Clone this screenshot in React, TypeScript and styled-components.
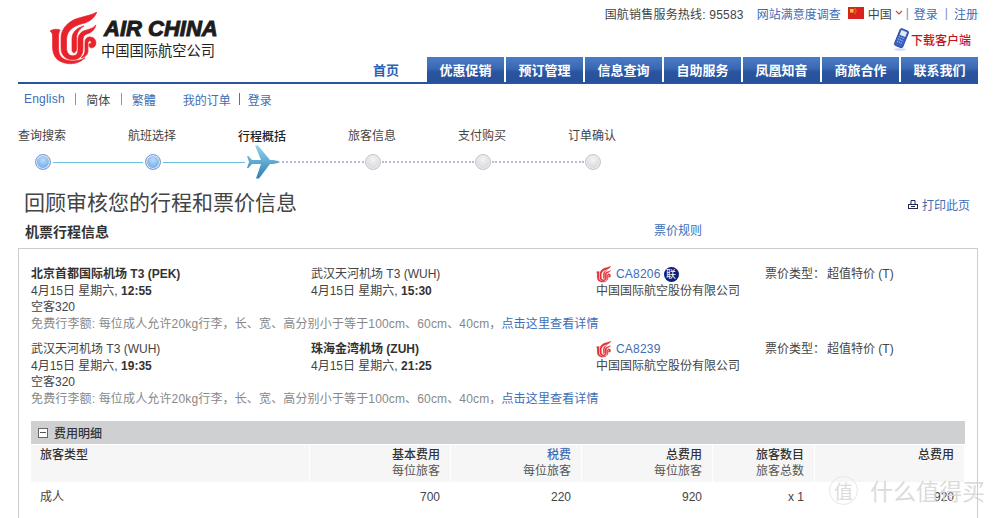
import React from 'react'
import styled, { createGlobalStyle } from 'styled-components'

const BLUE = '#3e6db5'
const TEXT = '#444'

const GlobalStyle = createGlobalStyle`
  html, body {
    margin: 0;
    padding: 0;
    background: #fff;
    overflow: hidden;
  }
  body {
    font-family: "Liberation Sans", "Noto Sans CJK SC", sans-serif;
    font-size: 12px;
    color: ${TEXT};
  }
`

const Page = styled.div`
  position: relative;
  width: 996px;
  height: 518px;
  box-sizing: border-box;
  padding: 0 18px;
  overflow: hidden;
`

const Header = styled.header`
  display: flex;
  justify-content: space-between;
  height: 82px;
  border-bottom: 2px solid #2a549f;
`

const Logo = styled.div`
  display: flex;
  align-items: flex-start;
  gap: 6px;
  margin: 12px 0 0 31px;
`

const Wordmark = styled.div`
  display: flex;
  flex-direction: column;
  padding-top: 5px;
`

const WordmarkEn = styled.span`
  margin-left: 1px;
  font: italic 700 22px/24px "Liberation Sans", sans-serif;
  color: #1d1d1d;
  -webkit-text-stroke: 1px #1d1d1d;
`

const WordmarkCn = styled.span`
  margin-left: -2px;
  font: 400 14.25px/18px "Noto Sans CJK SC", sans-serif;
  color: #222;
`

const HeaderRight = styled.div`
  display: flex;
  flex-direction: column;
  align-items: flex-end;
`

const TopLinks = styled.div`
  display: flex;
  align-items: center;
  height: 16px;
  margin-top: 5px;
  color: ${TEXT};
`

const Hotline = styled.span`
  letter-spacing: 0.2px;
`

const TopLink = styled.a<{ $gap?: number }>`
  color: ${BLUE};
  margin-left: ${(p) => p.$gap ?? 0}px;
`

const Pipe = styled.span<{ $wide?: boolean }>`
  color: #7b8fc0;
  margin: 0 ${(p) => (p.$wide ? 6 : 5)}px 0 ${(p) => (p.$wide ? 7 : 3)}px;
`

const Flag = styled.svg`
  margin: 0 4px 0 7px;
`

const Caret = styled.svg`
  margin-left: 3px;
`

const Download = styled.div`
  display: flex;
  align-items: center;
  gap: 1px;
  height: 26px;
  margin: 6px 7px 0 0;
  color: #c3141b;
  font-weight: 500;
`

const Nav = styled.nav`
  display: flex;
  align-items: stretch;
  height: 26px;
  margin-top: 5px;
`

const NavHome = styled.a`
  display: flex;
  align-items: center;
  margin-right: 26px;
  color: #2a63b5;
  font-size: 13px;
  font-weight: 700;
`

const NavItem = styled.a`
  display: flex;
  align-items: center;
  justify-content: center;
  width: 77px;
  margin-left: 2px;
  background: linear-gradient(#4a7cc4, #3a69b4 45%, #2a549f 60%, #28519b);
  color: #fff;
  font-size: 13px;
  font-weight: 700;

  &:first-of-type {
    margin-left: 0;
  }
`

const LangBar = styled.div`
  display: flex;
  align-items: center;
  height: 30px;
  padding-left: 6px;
`

const LangLink = styled.a<{ $active?: boolean; $gap?: number; $latin?: boolean }>`
  color: ${(p) => (p.$active ? TEXT : BLUE)};
  margin-left: ${(p) => p.$gap ?? 0}px;
  letter-spacing: ${(p) => (p.$latin ? '0.2px' : '0')};
`

const LangPipe = styled.span<{ $orange?: boolean }>`
  width: 1px;
  height: 12px;
  margin: 0 ${(p) => (p.$orange ? '10px' : '8px')} 0 ${(p) => (p.$orange ? '10.5px' : '8px')};
  background: ${(p) => (p.$orange ? '#c98a3c' : '#5a6f9c')};
`

const Steps = styled.div`
  display: flex;
  margin-top: 14px;
`

const Step = styled.div<{ $current?: boolean }>`
  width: 110px;
  height: 16px;
  line-height: 16px;
  margin-top: ${(p) => (p.$current ? 1 : 0)}px;
  color: ${(p) => (p.$current ? '#222' : TEXT)};
  font-weight: ${(p) => (p.$current ? 500 : 400)};
`

const Track = styled.div`
  display: flex;
  align-items: center;
  height: 34px;
  margin: 0 0 0 17px;
`

const Dot = styled.span<{ $done?: boolean }>`
  flex: none;
  box-sizing: border-box;
  width: 16px;
  height: 16px;
  border-radius: 50%;
  border: 1px solid ${(p) => (p.$done ? '#7f9ad2' : '#c4c4c4')};
  background: ${(p) =>
    p.$done
      ? 'radial-gradient(circle at 50% 35%, #bcdcf8, #6fa9e8 75%)'
      : 'radial-gradient(circle at 50% 35%, #f4f4f4, #d8d8d8 75%)'};
  box-shadow: inset 0 0 0 1px #e8eef8;
`

const Line = styled.span<{ $width: number }>`
  flex: none;
  width: ${(p) => p.$width}px;
  margin: 0 2px;
  border-top: 1px solid #6ec0e0;
`

const DottedLine = styled.span<{ $width: number }>`
  flex: none;
  width: ${(p) => p.$width}px;
  margin: 0 1px;
  border-top: 2px dotted #b7bbdc;
`

const PlaneSvg = styled.svg`
  flex: none;
`

const TitleRow = styled.div`
  display: flex;
  justify-content: space-between;
  align-items: flex-end;
  height: 30px;
  margin-top: 9px;
  padding: 0 8px 0 6px;
`

const Title = styled.h1`
  margin: 0;
  font: 400 21px/30px "Liberation Sans", "Noto Sans CJK SC", sans-serif;
  color: #444;
`

const PrintLink = styled.a`
  display: flex;
  align-items: center;
  gap: 4px;
  margin-bottom: 5px;
  color: ${BLUE};
`

const SubRow = styled.div`
  display: flex;
  align-items: center;
  height: 26px;
  padding-left: 7px;
`

const SubTitle = styled.h2`
  width: 629px;
  margin: 0;
  font-size: 14px;
  font-weight: 700;
  color: #333;
`

const RulesLink = styled.a`
  margin-top: -4px;
  color: ${BLUE};
`

const Box = styled.section`
  margin-top: 4px;
  padding: 17px 12px 0;
  border: 1px solid #ccc;
  height: 400px;
`

const Segment = styled.div`
  display: grid;
  grid-template-columns: 280px 285px 169px 1fr;
  line-height: 16.6px;
  margin-bottom: 9px;
  height: 66px;
`

const Stack = styled.div`
  display: flex;
  flex-direction: column;
`

const Airport = styled.span<{ $bold?: boolean }>`
  font-weight: ${(p) => (p.$bold ? 700 : 400)};
  color: ${(p) => (p.$bold ? '#333' : TEXT)};
`

const Time = styled.b`
  font-weight: 700;
  color: #333;
`

const Baggage = styled.div`
  grid-column: 1 / -1;
  color: #888;
  letter-spacing: 0.15px;
`

const BaggageLink = styled.a`
  color: ${BLUE};
`

const FlightNo = styled.div`
  display: flex;
  align-items: center;
  gap: 5px;
  color: ${BLUE};
  letter-spacing: 0.2px;
`

const LianBadge = styled.span`
  display: inline-flex;
  align-items: center;
  justify-content: center;
  width: 15px;
  height: 15px;
  margin-left: -2px;
  border-radius: 50%;
  background: #0c1e78;
  color: #fff;
  font-size: 10px;
  line-height: 15px;
`

const FareType = styled.div`
  display: flex;
  gap: 2px;
`

const FeePanel = styled.div`
  margin-top: 14px;
`

const FeeHead = styled.div`
  display: flex;
  align-items: center;
  gap: 6px;
  height: 23px;
  padding-left: 7px;
  background: #cfd0d2;
  color: #333;
  font-weight: 500;
`

const Toggle = styled.span`
  position: relative;
  display: block;
  box-sizing: border-box;
  width: 10px;
  height: 10px;
  border: 1px solid #666;
  background: #fff;

  &::after {
    content: '';
    position: absolute;
    left: 1px;
    right: 1px;
    top: 3px;
    height: 1px;
    background: #555;
  }
`

const FeeGrid = styled.div`
  display: grid;
  grid-template-columns: 279px 141px 131px 131px 102px 150px;
`

const HeadCell = styled.div<{ $left?: boolean }>`
  box-sizing: border-box;
  height: 37px;
  padding: 2px 10px 0 9px;
  margin: 1px 1px 0 0;
  background: #f6f6f6;
  text-align: ${(p) => (p.$left ? 'left' : 'right')};
  line-height: 16px;
`

const HeadStrong = styled.div<{ $link?: boolean }>`
  font-weight: 500;
  color: ${(p) => (p.$link ? BLUE : '#333')};
`

const HeadSub = styled.div`
  color: #555;
`

const BodyCell = styled.div<{ $left?: boolean }>`
  padding: 7px 11px 0 9px;
  line-height: 16px;
  text-align: ${(p) => (p.$left ? 'left' : 'right')};
`

const Watermark = styled.div`
  position: absolute;
  right: 11px;
  bottom: 11px;
  display: flex;
  align-items: center;
  gap: 12px;
  color: rgba(214, 214, 214, 0.88);
  font-size: 23px;
`

const WatermarkMark = styled.span`
  display: flex;
  align-items: center;
  justify-content: center;
  box-sizing: border-box;
  width: 29px;
  height: 29px;
  border: 1.5px solid rgba(225, 225, 225, 0.8);
  border-radius: 50%;
  font-size: 19px;
`

const PHOENIX_BODY = [
  'M1 19 C4 17 8 17 11 18 C10 20 9.5 22 9.5 25 L9.5 37 C9.5 44 13 48 21 49 C25 49.5 31 49 36 46 C30 52 22 53 15 51 C7 49 3.5 43 3.5 35 L3.5 24 C3.5 22 3 21 1 19 Z',
  'M12 26 C12 17 19 9 30 6 C37 4 43 3 48 0 C46 5 42 9 36 11 C27 13 18 17 17.5 27 L17.5 36 C17.5 41 20 44 24 44 C27 44 29 42 29 38 L29 28 C29 23 32 19 38 18 C42 17 46 15 47 13 C46 18 42 21 38 22 C35 23 34 25 34 29 L34 37 C34 44 30 48 24 48 C16 48 12 43 12 36 Z',
  'M23 38 L23 27 C23 21 27 16 35 14 C29 18 27.5 22 27.5 28 L27.5 37 C27.5 39.5 26 41 25 41 C24 41 23 40 23 38 Z',
  'M36 39 L36 31 C36 27 38 25 41 25 C45 25 47 28 47 31 C47 34 45 36 42.5 36 C41 36 40 35 40 33.5 C40 32 41 31 42.5 31.5 C42.5 29.5 41.5 28.5 40.5 29 C39 29.5 39 31 39 33 L39 39 C39 43 36 45.5 32 46 C34.5 44 36 42 36 39 Z',
]

const Phoenix = ({ size, color }: { size: number; color: string }) => (
  <svg width={size} height={size * 1.1} viewBox="0 0 48 53" fill={color} stroke={color} strokeWidth="0.7">
    {PHOENIX_BODY.map((d) => (
      <path key={d} d={d} />
    ))}
  </svg>
)

const PlaneIcon = () => (
  <PlaneSvg width="34" height="34" viewBox="0 0 34 34">
    <defs>
      <linearGradient id="plane" x1="0" y1="0" x2="0" y2="1">
        <stop offset="0" stopColor="#8fd4ee" />
        <stop offset="1" stopColor="#2f7fb5" />
      </linearGradient>
    </defs>
    <path
      fill="url(#plane)"
      d="M33 17 C31 15.5 27 15 23 15 L11 0.5 L8 0.5 L14 15 L5 15 L1.5 11 L0 11 L2 17 L0 23 L1.5 23 L5 19 L14 19 L9 33.5 L12 33.5 L23 19 C27 19 31 18.5 33 17 Z"
    />
  </PlaneSvg>
)

const PhoneIcon = () => (
  <svg width="18" height="24" viewBox="0 0 18 24">
    <g transform="rotate(22 9 10)">
      <rect x="5" y="1" width="9" height="18" rx="1.5" fill="#3b63c4" stroke="#24418f" strokeWidth="0.8" />
      <rect x="6.5" y="2.5" width="6" height="5" fill="#dfe9fb" />
      <path d="M6.5 9.5h6M6.5 12h6M6.5 14.5h6" stroke="#b9ccf2" strokeWidth="1" strokeDasharray="1 1" />
    </g>
    <ellipse cx="8" cy="21.5" rx="6" ry="1.5" fill="#d6deee" />
  </svg>
)

const PrinterIcon = () => (
  <svg width="10" height="10" viewBox="0 0 10 10" fill="none" stroke="#222c52" strokeWidth="1">
    <path d="M3 4.5V0.5H7V4.5" />
    <rect x="0.5" y="4.5" width="9" height="4" />
    <path d="M3 6.5H7" />
  </svg>
)

const ChinaFlag = () => (
  <Flag width="16" height="12" viewBox="0 0 16 12">
    <rect width="16" height="12" fill="#d8231f" />
    <rect x="2" y="2" width="3.5" height="3.5" fill="#f6d531" />
    <rect x="6.5" y="1.5" width="1" height="1" fill="#f6d531" />
    <rect x="7.5" y="3.5" width="1" height="1" fill="#f6d531" />
    <rect x="6.5" y="5.5" width="1" height="1" fill="#f6d531" />
  </Flag>
)

const navItems = ['优惠促销', '预订管理', '信息查询', '自助服务', '凤凰知音', '商旅合作', '联系我们']
const stepLabels = ['查询搜索', '航班选择', '行程概括', '旅客信息', '支付购买', '订单确认']
const baggage = '免费行李额: 每位成人允许20kg行李，长、宽、高分别小于等于100cm、60cm、40cm，'

type Flight = {
  from: string
  fromBold: boolean
  depart: string
  to: string
  toBold: boolean
  arrive: string
  number: string
  codeshare: boolean
}

const flights: Flight[] = [
  {
    from: '北京首都国际机场 T3 (PEK)',
    fromBold: true,
    depart: '12:55',
    to: '武汉天河机场 T3 (WUH)',
    toBold: false,
    arrive: '15:30',
    number: 'CA8206',
    codeshare: true,
  },
  {
    from: '武汉天河机场 T3 (WUH)',
    fromBold: false,
    depart: '19:35',
    to: '珠海金湾机场 (ZUH)',
    toBold: true,
    arrive: '21:25',
    number: 'CA8239',
    codeshare: false,
  },
]

const App = () => {
  return (
    <Page>
      <GlobalStyle />
      <Header>
        <Logo>
          <Phoenix size={48} color="#e8232c" />
          <Wordmark>
            <WordmarkEn>AIR CHINA</WordmarkEn>
            <WordmarkCn>中国国际航空公司</WordmarkCn>
          </Wordmark>
        </Logo>
        <HeaderRight>
          <TopLinks>
            <Hotline>国航销售服务热线: 95583</Hotline>
            <TopLink $gap={13}>网站满意度调查</TopLink>
            <ChinaFlag />
            中国
            <Caret width="8" height="6" viewBox="0 0 8 6" fill="none" stroke="#c0504d" strokeWidth="1.2">
              <path d="M1 1l3 3 3-3" />
            </Caret>
            <Pipe>|</Pipe>
            <TopLink>登录</TopLink>
            <Pipe $wide>|</Pipe>
            <TopLink>注册</TopLink>
          </TopLinks>
          <Download>
            <PhoneIcon />
            下载客户端
          </Download>
          <Nav>
            <NavHome>首页</NavHome>
            {navItems.map((item) => (
              <NavItem key={item}>{item}</NavItem>
            ))}
          </Nav>
        </HeaderRight>
      </Header>

      <LangBar>
        <LangLink $latin>English</LangLink>
        <LangPipe $orange />
        <LangLink $active>简体</LangLink>
        <LangPipe $orange />
        <LangLink>繁體</LangLink>
        <LangLink $gap={27}>我的订单</LangLink>
        <LangPipe />
        <LangLink>登录</LangLink>
      </LangBar>

      <Steps>
        {stepLabels.map((label, i) => (
          <Step key={label} $current={i === 2}>{label}</Step>
        ))}
      </Steps>
      <Track>
        <Dot $done />
        <Line $width={90} />
        <Dot $done />
        <Line $width={82} />
        <PlaneIcon />
        <DottedLine $width={82} />
        <Dot />
        <DottedLine $width={92} />
        <Dot />
        <DottedLine $width={92} />
        <Dot />
      </Track>

      <TitleRow>
        <Title>回顾审核您的行程和票价信息</Title>
        <PrintLink>
          <PrinterIcon />
          打印此页
        </PrintLink>
      </TitleRow>
      <SubRow>
        <SubTitle>机票行程信息</SubTitle>
        <RulesLink>票价规则</RulesLink>
      </SubRow>

      <Box>
        {flights.map((f) => (
          <Segment key={f.number}>
            <Stack>
              <Airport $bold={f.fromBold}>{f.from}</Airport>
              <span>4月15日 星期六, <Time>{f.depart}</Time></span>
              <span>空客320</span>
            </Stack>
            <Stack>
              <Airport $bold={f.toBold}>{f.to}</Airport>
              <span>4月15日 星期六, <Time>{f.arrive}</Time></span>
            </Stack>
            <Stack>
              <FlightNo>
                <Phoenix size={15} color="#e5333b" />
                {f.number}
                {f.codeshare && <LianBadge>联</LianBadge>}
              </FlightNo>
              <span>中国国际航空股份有限公司</span>
            </Stack>
            <FareType>
              <span>票价类型：</span>
              <span>超值特价 (T)</span>
            </FareType>
            <Baggage>
              {baggage}
              <BaggageLink>点击这里查看详情</BaggageLink>
            </Baggage>
          </Segment>
        ))}

        <FeePanel>
          <FeeHead>
            <Toggle />
            费用明细
          </FeeHead>
          <FeeGrid>
            <HeadCell $left>
              <HeadStrong>旅客类型</HeadStrong>
            </HeadCell>
            <HeadCell>
              <HeadStrong>基本费用</HeadStrong>
              <HeadSub>每位旅客</HeadSub>
            </HeadCell>
            <HeadCell>
              <HeadStrong $link>税费</HeadStrong>
              <HeadSub>每位旅客</HeadSub>
            </HeadCell>
            <HeadCell>
              <HeadStrong>总费用</HeadStrong>
              <HeadSub>每位旅客</HeadSub>
            </HeadCell>
            <HeadCell>
              <HeadStrong>旅客数目</HeadStrong>
              <HeadSub>旅客总数</HeadSub>
            </HeadCell>
            <HeadCell>
              <HeadStrong>总费用</HeadStrong>
            </HeadCell>
            <BodyCell $left>成人</BodyCell>
            <BodyCell>700</BodyCell>
            <BodyCell>220</BodyCell>
            <BodyCell>920</BodyCell>
            <BodyCell>x 1</BodyCell>
            <BodyCell>920</BodyCell>
          </FeeGrid>
        </FeePanel>
      </Box>

      <Watermark>
        <WatermarkMark>值</WatermarkMark>
        什么值得买
      </Watermark>
    </Page>
  )
}

export default App
